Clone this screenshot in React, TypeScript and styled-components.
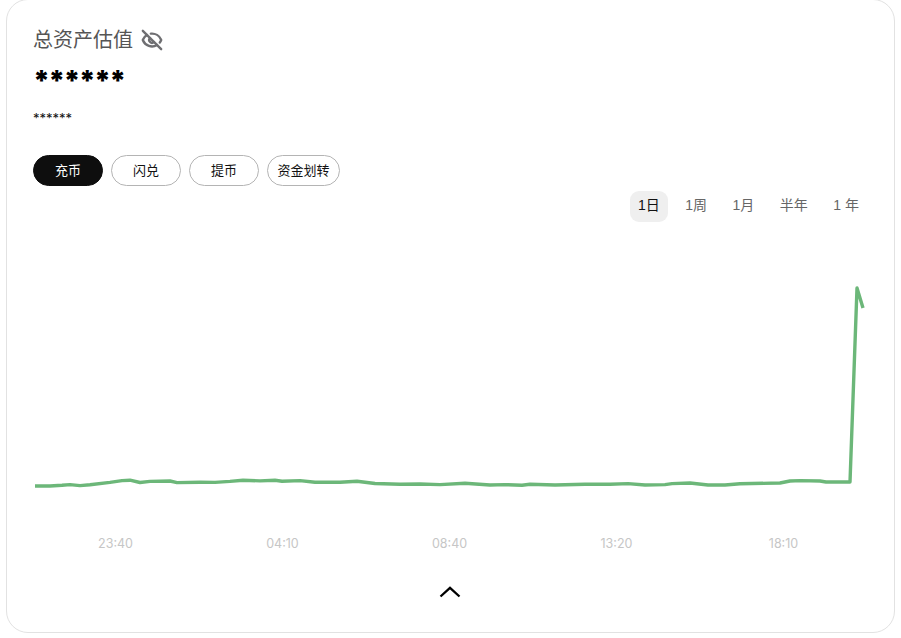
import styled, { createGlobalStyle } from "styled-components";
import { EyeOff } from "lucide-react";

const GlobalStyle = createGlobalStyle`
  html, body {
    margin: 0;
    padding: 0;
    background: #fff;
    overflow: hidden;
  }
  body {
    font-family: "Liberation Sans", "Noto Sans CJK SC", sans-serif;
  }
`;

const actions = ["充币", "闪兑", "提币", "资金划转"];
const ranges = ["1日", "1周", "1月", "半年", "1 年"];
const times = ["23:40", "04:10", "08:40", "13:20", "18:10"];

const linePoints = [
  [35, 486], [50, 486], [62, 485.3], [70, 484.6], [80, 485.6], [90, 484.8], [110, 482.4], [122, 480.6],
  [130, 480.2], [140, 482.5], [150, 481.4], [170, 481], [177, 482.6], [200, 482.2], [215, 482.4],
  [230, 481.4], [243, 480.2], [260, 480.9], [275, 480.3], [282, 481.2], [300, 480.6], [315, 482.2],
  [340, 482.3], [357, 481.2], [375, 483.5], [400, 484.2], [420, 484], [440, 484.6], [465, 483.2],
  [490, 485], [505, 484.6], [522, 485.2], [530, 484.2], [555, 485], [585, 484.2], [610, 484.2],
  [628, 483.6], [645, 485], [665, 484.6], [672, 483.6], [690, 483], [708, 485], [725, 485],
  [740, 483.8], [780, 483], [790, 481], [800, 480.6], [820, 481], [826, 482], [850, 482],
  [857, 288], [863, 308],
];

const App = () => {
  return (
    <>
      <GlobalStyle />
      <Card>
        <TitleRow>
          <Title>总资产估值</Title>
          <HideIcon size={22} strokeWidth={2.6} />
        </TitleRow>
        <Balance>******</Balance>
        <SubBalance>******</SubBalance>
        <Actions>
          {actions.map((label, index) => (
            <ActionButton key={label} $primary={index === 0} $wide={label.length > 2}>
              {label}
            </ActionButton>
          ))}
        </Actions>
        <Ranges>
          {ranges.map((label, index) => (
            <RangeTab key={label} $active={index === 0}>
              {label}
            </RangeTab>
          ))}
        </Ranges>
        <Chart viewBox="0 222 889 268" aria-hidden="true">
          <polyline
            points={linePoints.map(([x, y]) => `${x - 6},${y}`).join(" ")}
            fill="none"
            stroke="#6cb779"
            strokeWidth="3.4"
            strokeLinejoin="round"
          />
        </Chart>
        <Axis>
          {times.map((time) => (
            <AxisLabel key={time}>{time}</AxisLabel>
          ))}
        </Axis>
        <Collapse aria-label="收起">
          <svg width="22" height="12" viewBox="0 0 22 12" aria-hidden="true">
            <path d="M1.5 10.5 L11 1.8 L20.5 10.5" fill="none" stroke="#000" strokeWidth="2.3" />
          </svg>
        </Collapse>
      </Card>
    </>
  );
};

export default App;

const Card = styled.div`
  box-sizing: border-box;
  width: 889px;
  height: 634px;
  margin: -1px 0 0 6px;
  padding: 26px 26px 0;
  background: #fff;
  border: 1px solid #e2e2e2;
  border-radius: 22px;
`;

const TitleRow = styled.div`
  display: flex;
  align-items: center;
  gap: 8px;
  height: 26px;
  margin-top: 1px;
`;

const Title = styled.span`
  font-size: 20px;
  line-height: 26px;
  color: #555;
`;

const HideIcon = styled(EyeOff)`
  color: #6f6f72;
`;

const Balance = styled.div`
  margin-top: 14px;
  height: 28px;
  font-family: "Inter", sans-serif;
  font-size: 28px;
  font-weight: 900;
  line-height: 28px;
  letter-spacing: -1.8px;
  color: #000;
`;

const SubBalance = styled.div`
  margin-top: 15px;
  height: 16px;
  font-family: "Inter", sans-serif;
  font-size: 13px;
  line-height: 16px;
  color: #111;
`;

const Actions = styled.div`
  display: flex;
  gap: 8px;
  margin-top: 29px;
`;

const ActionButton = styled.button<{ $primary?: boolean; $wide?: boolean }>`
  box-sizing: border-box;
  width: ${(props) => (props.$wide ? "73px" : "70px")};
  height: 31px;
  padding: 0 0 2px;
  font-family: inherit;
  font-size: 13px;
  color: ${(props) => (props.$primary ? "#fff" : "#111")};
  background: ${(props) => (props.$primary ? "#0e0e0e" : "#fff")};
  border: 1px solid ${(props) => (props.$primary ? "#0e0e0e" : "#b4b4b4")};
  border-radius: 16px;
`;

const Ranges = styled.div`
  display: flex;
  justify-content: flex-end;
  margin-top: 5px;
  padding-right: 1px;
`;

const RangeTab = styled.div<{ $active?: boolean }>`
  box-sizing: border-box;
  height: 31px;
  padding: 0 8px;
  margin-left: 9.5px;
  font-size: 14px;
  line-height: 29px;
  text-align: center;
  color: ${(props) => (props.$active ? "#111" : "#666")};
  background: ${(props) => (props.$active ? "#efefef" : "transparent")};
  border-radius: 9px;
`;

const Chart = styled.svg`
  display: block;
  width: 889px;
  height: 268px;
  margin-left: -27px;
`;

const Axis = styled.div`
  display: grid;
  grid-template-columns: repeat(5, 167px);
  margin: 46px 0 0 -1px;
`;

const AxisLabel = styled.span`
  font-family: "Inter", sans-serif;
  font-size: 12.5px;
  line-height: 16px;
  text-align: center;
  color: #c6c6c6;
`;

const Collapse = styled.button`
  display: flex;
  justify-content: center;
  width: 100%;
  margin-top: 34px;
  padding: 0 2px 0 0;
  background: none;
  border: 0;
`;
